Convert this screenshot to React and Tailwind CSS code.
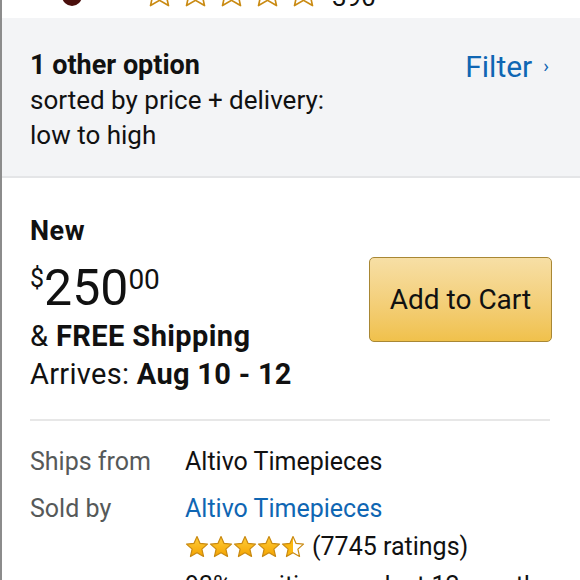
import React from "react";

const StarPath = "M12 1.5l3.09 6.9 7.41.74-5.6 4.98 1.64 7.38L12 17.7l-6.54 3.8 1.64-7.38-5.6-4.98 7.41-.74z";

function Star({ size = 24, fill = "full", id }) {
  return (
    <svg width={size} height={size} viewBox="0 0 24 24" className="shrink-0">
      <defs>
        <linearGradient id={`g-${id}`} x1="0" y1="0" x2="0" y2="1">
          <stop offset="0" stopColor="#ffce3a" />
          <stop offset="1" stopColor="#f4a300" />
        </linearGradient>
        <linearGradient id={`h-${id}`} x1="0" y1="0" x2="1" y2="0">
          <stop offset="0.5" stopColor="#fbb812" />
          <stop offset="0.5" stopColor="#ffffff" />
        </linearGradient>
      </defs>
      <path
        d={StarPath}
        fill={fill === "full" ? `url(#g-${id})` : fill === "half" ? `url(#h-${id})` : "#ffffff"}
        stroke="#c98a12"
        strokeWidth="1.2"
        strokeLinejoin="round"
      />
    </svg>
  );
}

export default function App() {
  return (
    <div
      className="w-[580px] h-[580px] overflow-hidden bg-white border-l-2 border-[#8c8c8c] text-[#111]"
      style={{ fontFamily: 'Roboto, "Noto Sans", Arial, sans-serif' }}
    >
      {/* top cut strip */}
      <div className="h-[18px] overflow-hidden">
        <div className="flex items-end -mt-[26px] h-[32px]">
          <div className="w-[20px] h-[14px] ml-[60px] rounded-b-[10px] bg-[#4a0f0c]" />
          <div className="flex gap-[3px] ml-[61px] mb-[-3px]">
            {[0, 1, 2, 3, 4].map((i) => (
              <Star key={i} id={`t${i}`} size={33} fill="none" />
            ))}
          </div>
          <span className="ml-[12px] text-[26px] leading-[28px] mb-[-5px]">390</span>
        </div>
      </div>

      {/* other options */}
      <div className="bg-[#f3f4f6] border-b-2 border-[#e4e5e7] h-[160px] pl-[28px] pr-[31px] pt-[30px] flex justify-between">
        <div className="flex flex-col">
          <span className="font-bold text-[27px] leading-[34px]">1 other option</span>
          <span className="text-[26px] leading-[35px] mt-[1px]">sorted by price + delivery:</span>
          <span className="text-[26px] leading-[35px]">low to high</span>
        </div>
        <div className="flex items-center h-[37px] gap-[11px] text-[#0f66b3]">
          <span className="text-[30px]">Filter</span>
          <span className="text-[19px]">›</span>
        </div>
      </div>

      {/* buy box */}
      <div className="px-[28px] pt-[35px]">
        <div className="flex justify-between">
          <div className="flex flex-col">
            <span className="font-bold text-[27px] leading-[36px] tracking-[0.5px]">New</span>
            <div className="flex items-start mt-[14px] h-[54px]">
              <span className="text-[25px] leading-[24px] mt-[4px]">$</span>
              <span className="text-[50px] leading-[50px]">250</span>
              <span className="text-[28px] leading-[28px] mt-[3px]">00</span>
            </div>
            <span className="text-[29px] leading-[38px] tracking-[0.4px]">
              &amp; <b>FREE Shipping</b>
            </span>
            <span className="text-[29px] leading-[38px] tracking-[0.3px]">
              Arrives: <b>Aug 10 - 12</b>
            </span>
          </div>
          <button className="mt-[44px] w-[183px] h-[85px] rounded-[5px] border border-[#a88734] bg-gradient-to-b from-[#f7dfa5] to-[#f0c14b] text-[28px] text-[#111]">
            Add to Cart
          </button>
        </div>

        <div className="mt-[26px] h-[2px] bg-[#e7e7e7] w-[520px]" />

        <div className="grid grid-cols-[155px_1fr] text-[25px] leading-[34px] mt-[24px] gap-y-[13px]">
          <span className="text-[#565959]">Ships from</span>
          <span>Altivo Timepieces</span>
          <span className="text-[#565959]">Sold by</span>
          <div className="flex flex-col">
            <span className="text-[#0f66b3]">Altivo Timepieces</span>
            <div className="flex items-center mt-[4px]">
              <div className="flex">
                {["full", "full", "full", "full", "half"].map((f, i) => (
                  <Star key={i} id={`b${i}`} size={24} fill={f} />
                ))}
              </div>
              <span className="ml-[7px]">(7745 ratings)</span>
            </div>
            <span className="mt-[5px]">93% positive over last 12 months</span>
          </div>
        </div>
      </div>
    </div>
  );
}
